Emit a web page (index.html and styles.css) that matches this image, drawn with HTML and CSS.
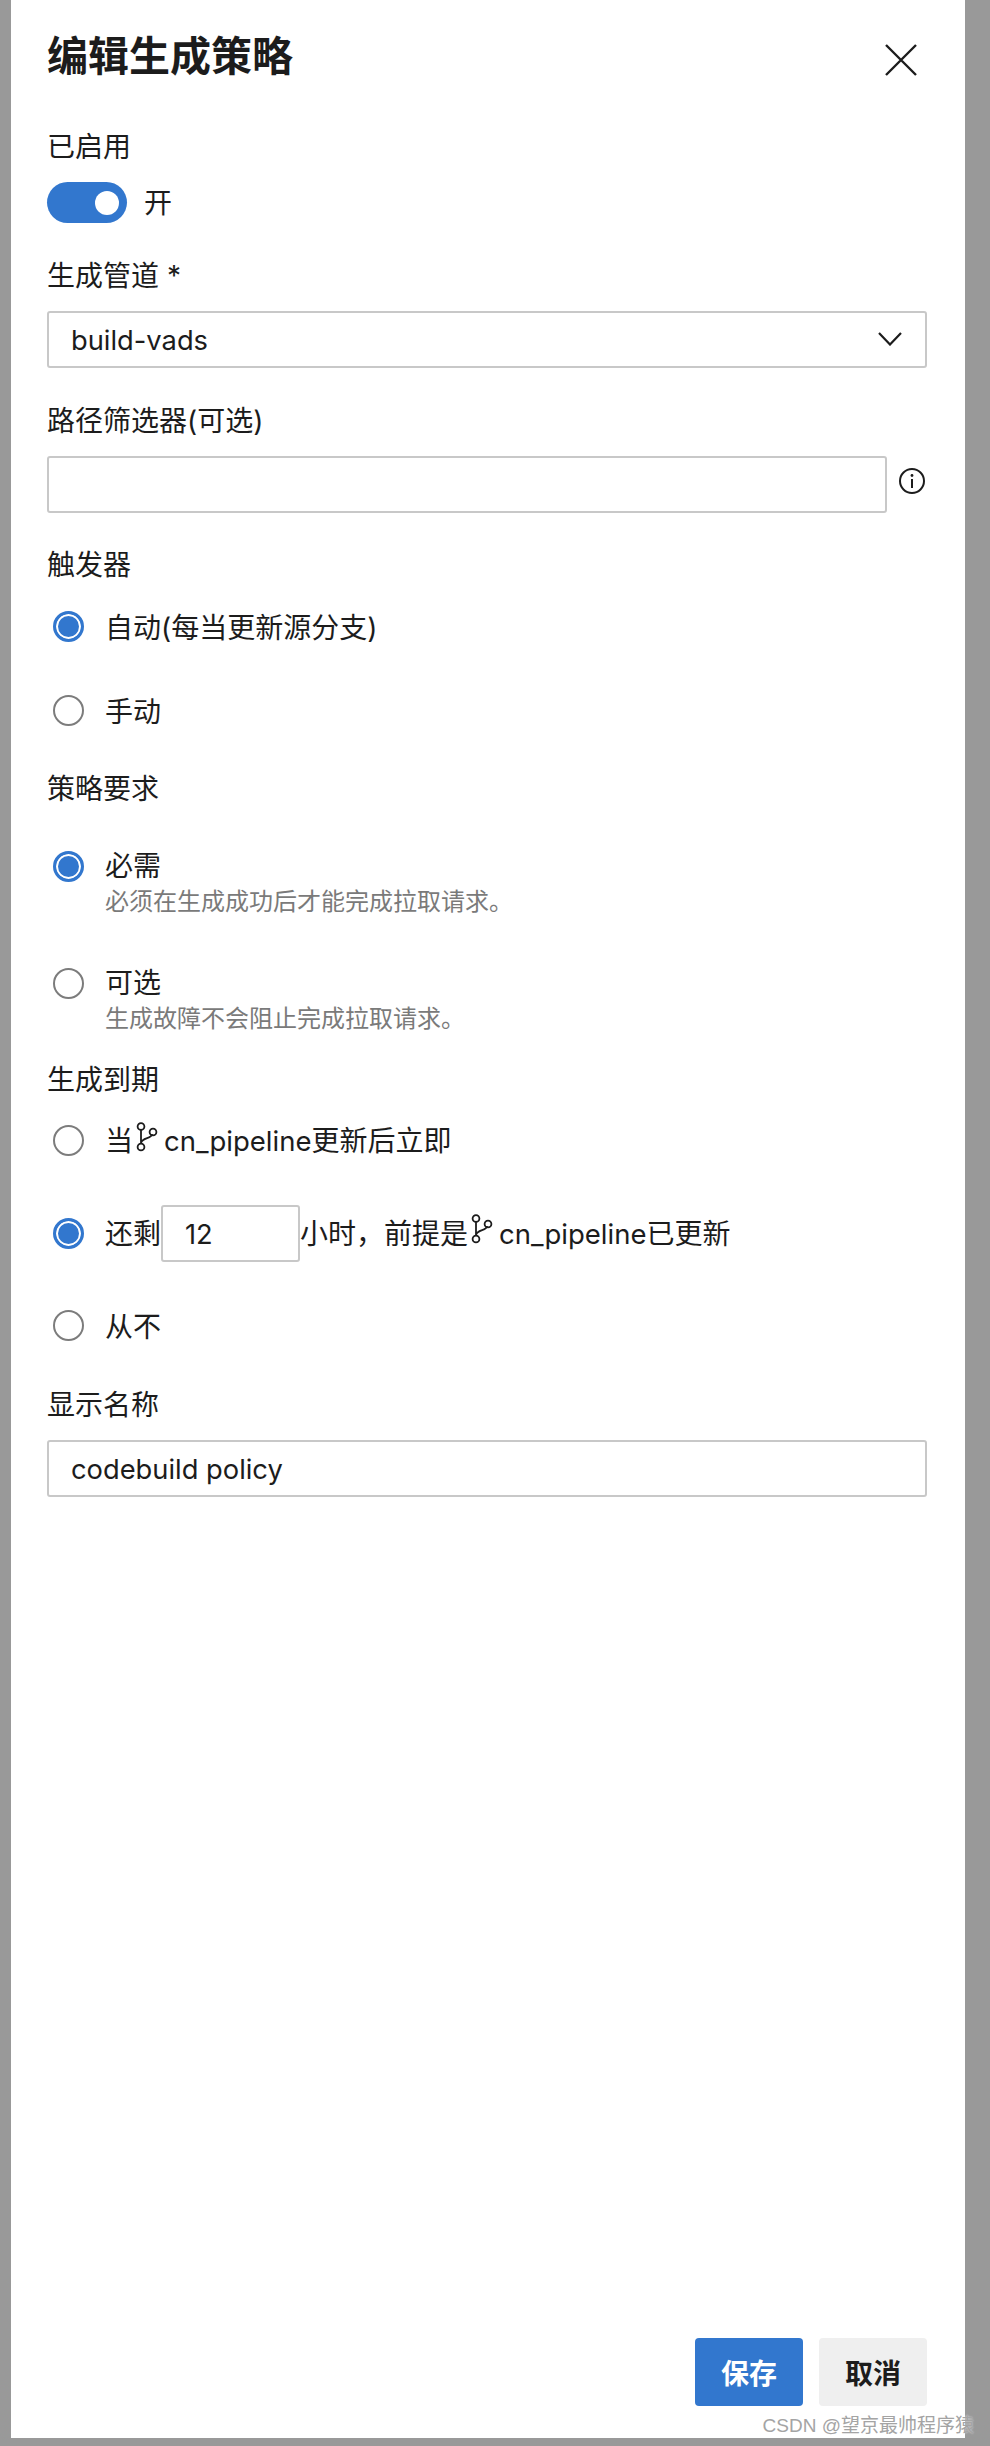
FILE: index.html
```html
<!DOCTYPE html>
<html lang="zh-CN">
<head>
  <meta charset="UTF-8">
  <title>编辑生成策略</title>
  <link rel="stylesheet" href="styles.css">
</head>
<body>
  <div class="panel">
    <!-- Header -->
    <div class="panel-header">
      <h1>编辑生成策略</h1>
      <svg class="close-icon" width="32" height="32" viewBox="0 0 32 32"><path d="M1 1 L31 31 M31 1 L1 31"/></svg>
    </div>

    <div class="label enabled-label">已启用</div>
    <div class="toggle-row">
      <span class="toggle"><span class="toggle-knob"></span></span>
      <span>开</span>
    </div>

    <div class="label field-label">生成管道 *</div>
    <div class="text-box select-box">
      <span>build-vads</span>
      <svg class="chevron" width="24" height="14" viewBox="0 0 24 14"><path d="M1 1 L12 12.5 L23 1"/></svg>
    </div>

    <div class="label field-label">路径筛选器(可选)</div>
    <div class="filter-row">
      <div class="text-box filter-box"></div>
      <svg class="info-icon" width="26" height="26" viewBox="0 0 26 26">
        <circle cx="13" cy="13" r="12"/>
        <path d="M13 11 V20"/>
        <circle class="info-dot" cx="13" cy="7.5" r="1.4"/>
      </svg>
    </div>

    <!-- Trigger -->
    <div class="label trigger-label">触发器</div>
    <div class="radio-row first-auto"><span class="radio checked"></span><span>自动(每当更新源分支)</span></div>
    <div class="radio-row next-manual"><span class="radio"></span><span>手动</span></div>

    <!-- Policy requirement -->
    <div class="label policy-label">策略要求</div>
    <div class="radio-row required-row">
      <span class="radio checked"></span>
      <div>
        <div class="option-title">必需</div>
        <div class="option-desc">必须在生成成功后才能完成拉取请求。</div>
      </div>
    </div>
    <div class="radio-row optional-row">
      <span class="radio"></span>
      <div>
        <div class="option-title">可选</div>
        <div class="option-desc">生成故障不会阻止完成拉取请求。</div>
      </div>
    </div>

    <!-- Build expiration -->
    <div class="label expire-label">生成到期</div>
    <div class="radio-row expire-first">
      <span class="radio"></span>
      <span class="inline-text">当<svg class="branch-icon" width="22" height="30" viewBox="0 0 22 30"><path d="M5 8 V22 M16 12 C16 17 6 15 5 21"/><circle cx="5" cy="4.5" r="3.4"/><circle cx="5" cy="25" r="3.4"/><circle cx="17" cy="10" r="3.4"/></svg><span class="branch-name">cn_pipeline</span>更新后立即</span>
    </div>
    <div class="radio-row expire-hours">
      <span class="radio checked"></span>
      <span class="inline-text">还剩<span class="text-box hours-box">12</span>小时，前提是<svg class="branch-icon" width="22" height="30" viewBox="0 0 22 30"><path d="M5 8 V22 M16 12 C16 17 6 15 5 21"/><circle cx="5" cy="4.5" r="3.4"/><circle cx="5" cy="25" r="3.4"/><circle cx="17" cy="10" r="3.4"/></svg><span class="branch-name">cn_pipeline</span>已更新</span>
    </div>
    <div class="radio-row expire-never"><span class="radio"></span><span>从不</span></div>

    <div class="label name-label">显示名称</div>
    <div class="text-box name-box">codebuild policy</div>

    <!-- Footer buttons -->
    <div class="panel-footer">
      <button class="btn btn-primary">保存</button>
      <button class="btn btn-cancel">取消</button>
    </div>
  </div>

  <div class="watermark">CSDN @望京最帅程序猿</div>
</body>
</html>
```

FILE: styles.css
```css
/* Global Styles */
body {
  margin: 0;
  height: 2446px;
  overflow: hidden;
  background-color: #999;
  color: #1c1c1c;
  font-family: Inter, "Noto Sans CJK SC", sans-serif;
  font-size: 28px;
  line-height: 38px;
}

/* White side panel */
.panel {
  display: flex;
  flex-direction: column;
  box-sizing: border-box;
  width: 954px;
  height: 2438px;
  margin-left: 11px;
  padding: 30px 38px 32px 36px;
  background-color: #fff;
}

.panel-header {
  display: flex;
  justify-content: space-between;
  height: 50px;
}

.panel-header h1 {
  margin: 0;
  font-size: 41px;
  line-height: 52px;
  font-weight: 700;
}

.close-icon {
  margin: 14px 10px 0 0;
}

.close-icon path {
  fill: none;
  stroke: #1c1c1c;
  stroke-width: 2.4;
}

/* Labels */
.label {
  height: 36px;
}

.enabled-label { margin-top: 48px; }
.field-label { margin-top: 34px; margin-bottom: 18px; }
.trigger-label { margin-top: 33px; }
.policy-label { margin-top: 41px; }
.expire-label { margin-top: 27px; }
.name-label { margin-top: 42px; margin-bottom: 18px; }

/* Toggle */
.toggle-row {
  display: flex;
  align-items: center;
  gap: 17px;
  margin-top: 18px;
}

.toggle {
  display: flex;
  align-items: center;
  justify-content: flex-end;
  box-sizing: border-box;
  width: 80px;
  height: 41px;
  padding-right: 8px;
  border-radius: 21px;
  background-color: #3277ce;
}

.toggle-knob {
  width: 24px;
  height: 24px;
  border-radius: 50%;
  background-color: #fff;
}

/* Text boxes */
.text-box {
  display: flex;
  align-items: center;
  box-sizing: border-box;
  height: 57px;
  padding: 2px 22px 0;
  border: 2px solid #c8c8c8;
  border-radius: 3px;
  background-color: #fff;
  font-size: 27.3px;
}

.select-box {
  justify-content: space-between;
  padding-right: 23px;
}

.chevron {
  margin-bottom: 3px;
}

.chevron path {
  fill: none;
  stroke: #1c1c1c;
  stroke-width: 2.2;
}

.filter-row {
  display: flex;
  gap: 12px;
}

.filter-box {
  width: 840px;
}

.info-icon {
  margin-top: 12px;
}

.info-icon circle,
.info-icon path {
  fill: none;
  stroke: #1c1c1c;
  stroke-width: 2;
}

.info-icon .info-dot {
  fill: #1c1c1c;
  stroke: none;
}

/* Radios */
.radio-row {
  display: flex;
  padding-left: 6px;
  gap: 21px;
}

.radio {
  flex: none;
  box-sizing: border-box;
  width: 31px;
  height: 31px;
  margin-top: 2px;
  border: 2px solid #7c7c7c;
  border-radius: 50%;
}

.radio.checked {
  border: 3px solid #3277ce;
  background-color: #3277ce;
  box-shadow: inset 0 0 0 2px #fff;
}

.first-auto { margin-top: 27px; height: 36px; }
.next-manual { margin-top: 48px; height: 36px; }
.required-row { margin-top: 41px; }
.optional-row { margin-top: 47px; }
.expire-first { margin-top: 26px; height: 36px; }
.expire-hours { margin-top: 46px; align-items: center; }
.expire-never { margin-top: 46px; height: 36px; }

.required-row .radio,
.optional-row .radio {
  margin-top: 4px;
}

.expire-hours .radio {
  margin-top: 0;
}

.option-title {
  height: 36px;
}

.option-desc {
  height: 32px;
  margin-top: 2px;
  color: #7a7a7a;
  font-size: 24px;
  line-height: 34px;
}

.inline-text {
  display: flex;
  align-items: center;
}

.branch-name {
  font-size: 27.5px;
}

.branch-icon {
  margin: -9px 6px 0 3px;
}

.branch-icon path,
.branch-icon circle {
  fill: none;
  stroke: #1c1c1c;
  stroke-width: 1.8;
}

.hours-box {
  width: 139px;
  padding-left: 22px;
}

.name-box {
  height: 57px;
}

/* Footer */
.panel-footer {
  display: flex;
  justify-content: flex-end;
  gap: 16px;
  margin-top: auto;
}

.btn {
  width: 108px;
  height: 68px;
  border: none;
  border-radius: 4px;
  font-family: Inter, "Noto Sans CJK SC", sans-serif;
  font-size: 28px;
  font-weight: 700;
}

.btn-primary {
  background-color: #3277ce;
  color: #fff;
}

.btn-cancel {
  background-color: #efefef;
  color: #1c1c1c;
}

/* Image-host watermark, sits over the panel corner */
.watermark {
  position: absolute;
  right: 16px;
  bottom: 7px;
  color: #a4a4a4;
  font-family: "Liberation Sans", "Noto Sans CJK SC", sans-serif;
  font-size: 19px;
  line-height: 26px;
  white-space: nowrap;
  text-shadow: 0 0 2px rgba(255, 255, 255, 0.7);
}
```
